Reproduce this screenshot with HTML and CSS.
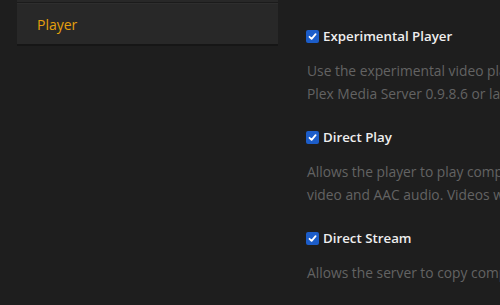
FILE: index.html
```html
<!DOCTYPE html>
<html lang="en">
<head>
    <meta charset="UTF-8">
    <title>Settings - Player</title>
    <link rel="stylesheet" href="styles.css">
</head>
<body>
    <div class="sidebar">
        <div class="nav-item nav-prev"></div>
        <div class="nav-item active">Player</div>
    </div>
    <div class="main">
        <div class="setting">
            <label class="setting-label">
                <span class="check"><svg viewBox="0 0 13 13" width="13" height="13"><path d="M3.5 6.8 L5.6 8.9 L9.6 4.2" fill="none" stroke="#fff" stroke-width="1.8" stroke-linecap="round" stroke-linejoin="round"/></svg></span>
                Experimental Player
            </label>
            <p class="setting-desc">Use the experimental video player. Requires<br>Plex Media Server 0.9.8.6 or later.</p>
        </div>
        <div class="setting">
            <label class="setting-label">
                <span class="check"><svg viewBox="0 0 13 13" width="13" height="13"><path d="M3.5 6.8 L5.6 8.9 L9.6 4.2" fill="none" stroke="#fff" stroke-width="1.8" stroke-linecap="round" stroke-linejoin="round"/></svg></span>
                Direct Play
            </label>
            <p class="setting-desc">Allows the player to play compatible files with H.264<br>video and AAC audio. Videos will play directly.</p>
        </div>
        <div class="setting">
            <label class="setting-label">
                <span class="check"><svg viewBox="0 0 13 13" width="13" height="13"><path d="M3.5 6.8 L5.6 8.9 L9.6 4.2" fill="none" stroke="#fff" stroke-width="1.8" stroke-linecap="round" stroke-linejoin="round"/></svg></span>
                Direct Stream
            </label>
            <p class="setting-desc">Allows the server to copy compatible streams.</p>
        </div>
    </div>
</body>
</html>
```

FILE: styles.css
```css
body {
    margin: 0;
    background-color: #1e1e1e;
    font-family: 'Open Sans', sans-serif;
    display: flex;
    overflow: hidden;
    height: 305px;
}
.sidebar {
    width: 261px;
    margin-left: 17px;
    flex-shrink: 0;
}
.nav-item {
    background-color: #282828;
}
.nav-prev {
    height: 2px;
    border-bottom: 1px solid #1b1b1b;
}
.active {
    height: 43px;
    box-sizing: border-box;
    padding-left: 20px;
    display: flex;
    align-items: center;
    color: #e5a00d;
    font-size: 14px;
    border-top: 1px solid #2e2e2e;
    border-bottom: 2px solid #161616;
}
.main {
    padding-top: 26px;
    padding-left: 28px;
    white-space: nowrap;
    overflow: hidden;
}
.setting {
    margin-bottom: 22.5px;
}
.setting-label {
    display: flex;
    align-items: center;
    height: 20px;
    color: #eeeeee;
    font-size: 13.3px;
    font-weight: 600;
}
.check {
    width: 13px;
    height: 13px;
    border-radius: 2px;
    background-color: #1c5dc9;
    margin-right: 4px;
    display: flex;
}
.setting-desc {
    margin: 12.5px 0 0 1px;
    color: #636363;
    font-size: 13.8px;
    line-height: 23px;
}
```
